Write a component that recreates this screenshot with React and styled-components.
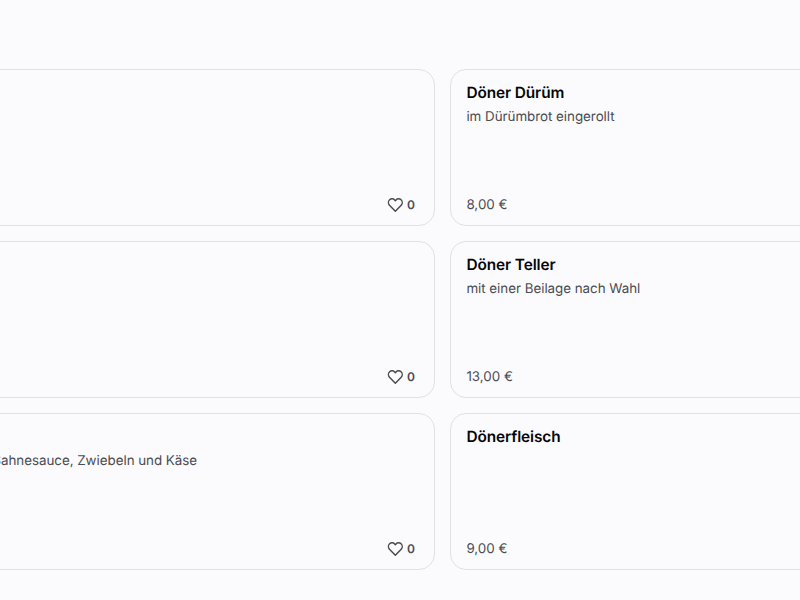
import React from 'react';
import styled, { createGlobalStyle } from 'styled-components';

const dishes = [
  { id: 1, name: '', description: '', price: '', likes: 0 },
  { id: 2, name: 'Döner Dürüm', description: 'im Dürümbrot eingerollt', price: '8,00 €' },
  { id: 3, name: '', description: '', price: '', likes: 0 },
  { id: 4, name: 'Döner Teller', description: 'mit einer Beilage nach Wahl', price: '13,00 €' },
  { id: 5, name: '', description: 'Sahnesauce, Zwiebeln und Käse', price: '', likes: 0 },
  { id: 6, name: 'Dönerfleisch', description: '', price: '9,00 €' },
];

const HeartIcon = () => (
  <svg width="16" height="16" viewBox="0 0 24 24" fill="none" stroke="currentColor" strokeWidth="2.2" strokeLinejoin="round">
    <path d="M12.5 21.4 3.7 12.2C1.6 10 1.7 6.3 3.9 4.2c2.2-2.1 5.6-2 7.6.2l1 1.2 1-1.2c2-2.2 5.4-2.3 7.6-.2 2.2 2.1 2.3 5.8.2 8z" />
  </svg>
);

const MenuCard = ({ dish }) => (
  <Card>
    <Name>{dish.name}</Name>
    <Description>{dish.description}</Description>
    <Footer>
      <Price>{dish.price}</Price>
      {dish.likes !== undefined && (
        <Likes>
          <HeartIcon />
          <Count>{dish.likes}</Count>
        </Likes>
      )}
    </Footer>
  </Card>
);

const App = () => (
  <>
    <GlobalStyle />
    <Page>
      <Grid>
        {dishes.map((dish) => (
          <MenuCard key={dish.id} dish={dish} />
        ))}
      </Grid>
    </Page>
  </>
);

const GlobalStyle = createGlobalStyle`
  * {
    box-sizing: border-box;
  }

  body {
    margin: 0;
    background: #fbfbfd;
    font-family: Inter, sans-serif;
    text-rendering: geometricPrecision;
    overflow: hidden;
  }
`;

const Page = styled.main`
  width: 100%;
  height: 600px;
  padding-top: 69px;
  overflow: hidden;
`;

const Grid = styled.div`
  display: grid;
  grid-template-columns: 459px 460px;
  grid-auto-rows: 157px;
  gap: 15px;
  margin-left: -24px;
`;

const Card = styled.article`
  display: flex;
  flex-direction: column;
  padding: 11px 19px 8px 15.4px;
  border: 1px solid #dfe1e5;
  border-radius: 16px;
`;

const Name = styled.h3`
  margin: 0;
  height: 24px;
  font-size: 15.4px;
  font-weight: 600;
  line-height: 24px;
  letter-spacing: -0.1px;
  color: #050609;
`;

const Description = styled.p`
  margin: 2px 0 0;
  font-size: 13.4px;
  line-height: 20px;
  letter-spacing: -0.04px;
  color: #4b4d52;
`;

const Footer = styled.div`
  display: flex;
  align-items: center;
  justify-content: space-between;
  height: 24px;
  margin-top: auto;
`;

const Price = styled.span`
  font-size: 13.4px;
  line-height: 22px;
  color: #4b4d52;
`;

const Likes = styled.div`
  display: flex;
  align-items: center;
  gap: 4px;
  color: #4a4c51;
`;

const Count = styled.span`
  font-size: 12px;
  font-weight: 600;
  line-height: 16px;
  padding-bottom: 1px;
`;

export default App;
